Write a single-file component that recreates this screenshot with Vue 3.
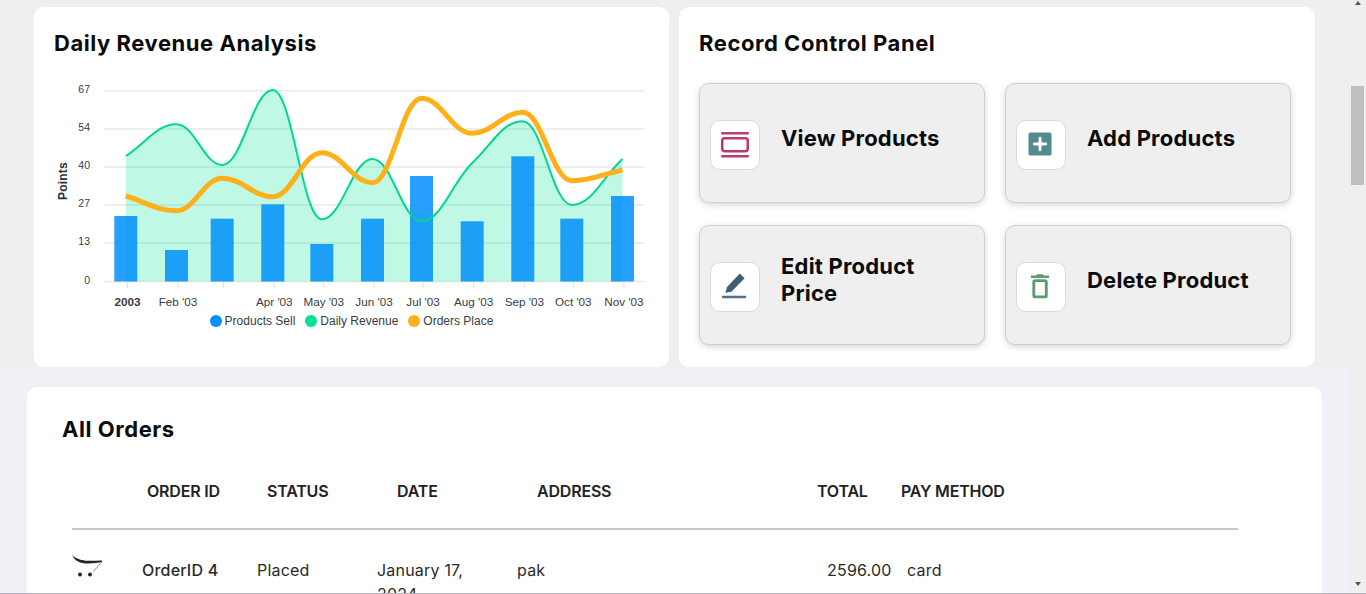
<template>
  <div class="page">
    <main class="main">
      <section class="top">
        <div class="card">
          <h2 class="title">Daily Revenue Analysis</h2>
          <svg class="chart" viewBox="54 78 600 234" width="600" height="234">
            <!-- grid -->
            <g v-for="g in grid" :key="g.label">
              <line x1="104" x2="644" :y1="g.y" :y2="g.y" class="grid-line" />
              <text x="90" :y="g.y + 2" class="y-label">{{ g.label }}</text>
            </g>
            <text class="y-title" transform="translate(67 181) rotate(-90)">Points</text>

            <!-- series -->
            <path :d="areaPath" class="area" />
            <rect
              v-for="b in bars"
              :key="b.x"
              :x="b.x"
              :y="b.y"
              width="23"
              :height="BASE - b.y"
              class="bar"
            />
            <path :d="revenuePath" class="line-revenue" />
            <path :d="ordersPath" class="line-orders" />

            <!-- eje x -->
            <g v-for="m in months" :key="m.x">
              <line :x1="m.x" :x2="m.x" y1="282" y2="288" class="tick" />
              <text :x="m.x" y="306" class="x-label" :class="{ bold: m.bold }">{{ m.label }}</text>
            </g>
          </svg>
          <div class="legend">
            <span v-for="l in legend" :key="l.name" class="legend-item">
              <i class="dot" :style="{ background: l.color }"></i>{{ l.name }}
            </span>
          </div>
        </div>

        <div class="card">
          <h2 class="title">Record Control Panel</h2>
          <div class="tiles">
            <div class="tile">
              <div class="tile-icon">
                <svg viewBox="0 0 50 50" width="48" height="48">
                  <rect x="10.5" y="11.5" width="29" height="2.6" rx="1" fill="#b93a73" />
                  <rect x="11.7" y="18" width="26.6" height="13.5" rx="2.5" fill="none" stroke="#b93a73" stroke-width="2.6" />
                  <rect x="10.5" y="35.5" width="29" height="2.6" rx="1" fill="#b93a73" />
                </svg>
              </div>
              <span class="tile-text">View Products</span>
            </div>
            <div class="tile">
              <div class="tile-icon">
                <svg viewBox="0 0 50 50" width="48" height="48">
                  <rect x="12" y="12" width="24" height="24" rx="2" fill="#528a8f" />
                  <path d="M24 18v12M18 24h12" stroke="#fff" stroke-width="3" stroke-linecap="round" />
                </svg>
              </div>
              <span class="tile-text">Add Products</span>
            </div>
            <div class="tile">
              <div class="tile-icon">
                <svg viewBox="0 0 50 50" width="48" height="48">
                  <path d="M15 31l1.700-6L30 11l5 5-13.700 14z" fill="#3f6073" />
                  <rect x="11.300" y="34" width="25.400" height="2.700" rx="1" fill="#527386" />
                </svg>
              </div>
              <span class="tile-text">Edit Product Price</span>
            </div>
            <div class="tile">
              <div class="tile-icon">
                <svg viewBox="0 0 50 50" width="48" height="48">
                  <path d="M14.500 14.200h19M20.500 13h7" stroke="#5e9b75" stroke-width="2.600" fill="none" />
                  <rect x="17.500" y="18.300" width="13" height="17" rx="1.500" fill="none" stroke="#5e9b75" stroke-width="3" />
                </svg>
              </div>
              <span class="tile-text">Delete Product</span>
            </div>
          </div>
        </div>
      </section>

      <section class="bottom">
        <div class="orders">
          <h2 class="title">All Orders</h2>
          <div class="table">
            <div class="thead">
              <span></span>
              <span>ORDER ID</span>
              <span>STATUS</span>
              <span>DATE</span>
              <span>ADDRESS</span>
              <span>TOTAL</span>
              <span>PAY METHOD</span>
            </div>
            <div class="row">
              <svg class="cart" viewBox="0 0 32 24" width="32" height="24">
                <path d="M0 0C4 4 10 5.500 16 5.800C21 6 26 5.500 30 5.500L30 7C24 8 12 10 6 6.500C3 5 1 2 0 0Z" fill="#23232b" />
                <path d="M30 6.500L21.500 16.500" stroke="#8a8a90" stroke-width="1" fill="none" />
                <circle cx="8" cy="19.500" r="2" fill="#23232b" />
                <circle cx="18" cy="19.500" r="2" fill="#23232b" />
              </svg>
              <span class="medium">OrderID 4</span>
              <span>Placed</span>
              <span class="date">January 17, 2024</span>
              <span>pak</span>
              <span>2596.00</span>
              <span>card</span>
            </div>
          </div>
        </div>
      </section>
    </main>

    <div class="scrollbar">
      <i class="arrow-up"></i>
      <i class="thumb"></i>
      <i class="arrow-down"></i>
    </div>
  </div>
</template>

<script setup>
const BASE = 281.5;

const grid = [
  { label: "67", y: 90.7 },
  { label: "54", y: 128.9 },
  { label: "40", y: 167 },
  { label: "27", y: 205 },
  { label: "13", y: 243 },
  { label: "0", y: BASE },
];

const bars = [
  { x: 114.3, y: 216 },
  { x: 165, y: 250 },
  { x: 210.7, y: 218.7 },
  { x: 261.3, y: 204.3 },
  { x: 310.3, y: 244 },
  { x: 361, y: 218.7 },
  { x: 410, y: 176 },
  { x: 460.7, y: 221.3 },
  { x: 511.3, y: 156.3 },
  { x: 560.3, y: 218.7 },
  { x: 611, y: 196 },
];

const months = [
  { label: "2003", x: 127.5, bold: true },
  { label: "Feb '03", x: 178 },
  { label: "", x: 223.5 },
  { label: "Apr '03", x: 274.3 },
  { label: "May '03", x: 323.7 },
  { label: "Jun '03", x: 374 },
  { label: "Jul '03", x: 423 },
  { label: "Aug '03", x: 473.7 },
  { label: "Sep '03", x: 524.3 },
  { label: "Oct '03", x: 573.3 },
  { label: "Nov '03", x: 624 },
];

const legend = [
  { name: "Products Sell", color: "#008ffb" },
  { name: "Daily Revenue", color: "#00e396" },
  { name: "Orders Place", color: "#feb019" },
];

const xs = bars.map((b) => b.x + 11.5);
const revenue = [156, 124.3, 165, 90, 219.3, 159, 221, 163, 121.3, 205, 159];
const orders = [196, 210.7, 178.3, 196.7, 152.7, 182.7, 98.3, 133.3, 112.3, 180.7, 170];

// curva suave: tangente plana en los picos
function smooth(ys) {
  const t = ys.map((y, i) => {
    if (i === 0) return (ys[1] - y) / (xs[1] - xs[0]);
    if (i === ys.length - 1) return (y - ys[i - 1]) / (xs[i] - xs[i - 1]);
    const a = (y - ys[i - 1]) / (xs[i] - xs[i - 1]);
    const b = (ys[i + 1] - y) / (xs[i + 1] - xs[i]);
    return a * b <= 0 ? 0 : (2 * a * b) / (a + b);
  });
  let d = `M${xs[0]} ${ys[0]}`;
  for (let i = 1; i < ys.length; i++) {
    const h = (xs[i] - xs[i - 1]) * 0.4;
    d += `C${xs[i - 1] + h} ${ys[i - 1] + t[i - 1] * h} ${xs[i] - h} ${ys[i] - t[i] * h} ${xs[i]} ${ys[i]}`;
  }
  return d;
}

const revenuePath = smooth(revenue);
const ordersPath = smooth(orders);
const areaPath = `${revenuePath}V${BASE}H${xs[0]}Z`;
</script>

<style scoped>
.page {
  display: flex;
  width: 1366px;
  height: 594px;
  overflow: hidden;
  box-sizing: border-box;
  border-bottom: 1px solid #b4b4bc;
  font-family: Inter, "Noto Sans", sans-serif;
  color: #111;
}

.main {
  width: 1349px;
  flex: none;
  display: flex;
  flex-direction: column;
}

/* Fila superior */
.top {
  display: grid;
  grid-template-columns: 635px 636px;
  gap: 10px;
  height: 360px;
  flex: none;
  padding: 7px 0 0 34px;
  background: #efefef;
}

.card {
  background: #fff;
  border-radius: 10px;
  padding: 20px;
}

.title {
  margin: 0;
  font-size: 22px;
  line-height: 33px;
  font-weight: 700;
  letter-spacing: 0.55px;
  color: #0b0b0b;
}

.chart {
  display: block;
  margin-top: 18px;
}

.grid-line {
  stroke: #e9e9e9;
  stroke-width: 1.500;
}

.y-label,
.x-label,
.y-title {
  font-family: "Liberation Sans", Arial, sans-serif;
  fill: #373d3f;
}

.y-label {
  font-size: 10.500px;
  text-anchor: end;
}

.y-title {
  font-size: 12px;
  font-weight: 700;
  text-anchor: middle;
  letter-spacing: 0.2px;
  fill: #263238;
}

.x-label {
  font-size: 11.700px;
  text-anchor: middle;
}

.x-label.bold {
  font-weight: 700;
}

.tick {
  stroke: #e0e0e0;
}

.bar {
  fill: #008ffb;
  fill-opacity: 0.85;
}

.area {
  fill: #00e396;
  fill-opacity: 0.25;
}

.line-revenue {
  fill: none;
  stroke: #00d890;
  stroke-width: 2;
}

.line-orders {
  fill: none;
  stroke: #feb019;
  stroke-width: 5;
}

.legend {
  display: flex;
  justify-content: center;
  gap: 10px;
  margin-top: 2px;
  font: 12px/14px "Liberation Sans", Arial, sans-serif;
  color: #373d3f;
}

.legend-item {
  display: flex;
  align-items: center;
  gap: 3px;
}

.dot {
  width: 12px;
  height: 12px;
  border-radius: 50%;
}

/* Botones */
.tiles {
  display: grid;
  grid-template-columns: 286px 286px;
  grid-auto-rows: 120px;
  gap: 22px 20px;
  margin-top: 23px;
}

.tile {
  display: flex;
  gap: 21px;
  box-sizing: border-box;
  padding: 0 20px 0 10px;
  background: #efefef;
  border: 1px solid #cfcfcf;
  border-radius: 10px;
  box-shadow: 0 2px 6px rgba(0, 0, 0, 0.16);
}

.tile-icon {
  width: 48px;
  height: 48px;
  flex: none;
  margin-top: 36px;
  background: #fff;
  border: 1px solid #d9d9d9;
  border-radius: 10px;
}

.tile-icon svg {
  display: block;
}

.tile-text {
  align-self: center;
  margin-bottom: 10px;
  font-size: 22px;
  line-height: 27px;
  font-weight: 700;
  letter-spacing: 0.2px;
  color: #0b0b0b;
}

/* Pedidos */
.bottom {
  flex: 1;
  padding: 20px 27px 0;
  background: #f0f1f6;
}

.orders {
  background: #fff;
  border-radius: 10px 10px 0 0;
  height: 100%;
  box-sizing: border-box;
  padding: 26px 35px 0;
}

.table {
  margin: 33px 0 0 10px;
  width: 1166px;
}

.thead {
  display: grid;
  grid-template-columns: 75px 120px 130px 140px 280px 84px 1fr;
  padding-bottom: 25px;
  border-bottom: 2px solid #c8c8c8;
  font-size: 16px;
  line-height: 24px;
  font-weight: 600;
  letter-spacing: -0.2px;
  color: #222;
}

.row {
  display: grid;
  grid-template-columns: 70px 115px 120px 140px 310px 80px 1fr;
  padding-top: 28px;
  font-size: 16px;
  line-height: 24px;
  letter-spacing: 0.2px;
  color: #2a2a2a;
}

.medium {
  font-weight: 500;
}

.date {
  padding-right: 20px;
}

.cart {
  display: block;
  margin-top: -3px;
}

/* Barra de desplazamiento */
.scrollbar {
  flex: 1;
  display: flex;
  flex-direction: column;
  align-items: center;
  padding: 1px 0 7px;
  background: #efefef;
}

.arrow-up,
.arrow-down {
  width: 0;
  height: 0;
  border-left: 3.500px solid transparent;
  border-right: 3.500px solid transparent;
}

.arrow-up {
  border-bottom: 4px solid #555;
}

.arrow-down {
  margin-top: auto;
  border-top: 4px solid #555;
}

.thumb {
  width: 13px;
  height: 99px;
  margin-top: 81px;
  background: #bfbfbf;
}
</style>

<style>
html,
body {
  margin: 0;
  overflow: hidden;
}
</style>
